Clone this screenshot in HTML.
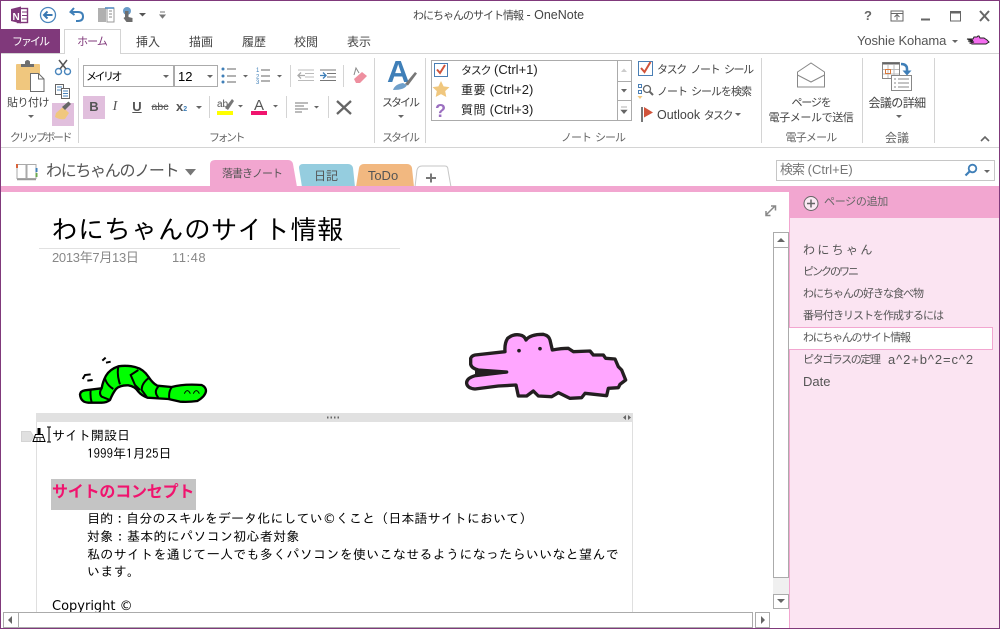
<!DOCTYPE html>
<html lang="ja">
<head>
<meta charset="utf-8">
<title>わにちゃんのサイト情報 - OneNote</title>
<style>
html,body{margin:0;padding:0;background:#fff;}
#w{position:relative;width:1000px;height:629px;overflow:hidden;background:#fff;font-family:"Liberation Sans","Noto Sans CJK JP",sans-serif;color:#444;font-size:12px;}
.t{position:absolute;white-space:nowrap;line-height:18px;height:18px;}
.c{transform:translateX(-50%);}
.b{position:absolute;box-sizing:border-box;}
.l{color:#666;font-size:11px;}
.g{font-family:"IPAGothic","Liberation Sans",sans-serif;color:#000;font-size:13px;letter-spacing:.3px;}
.p{color:#555;font-size:11px;letter-spacing:-1px;}
svg{position:absolute;overflow:visible;}
.ar{position:absolute;width:0;height:0;border-left:3px solid transparent;border-right:3px solid transparent;border-top:3px solid #666;}
.sep{position:absolute;width:1px;background:#d4d4d4;}
</style>
</head>
<body>
<div id="w">
<!-- QAT -->
<svg style="left:0;top:0" width="200" height="28">
<rect x="17.500" y="8.500" width="10" height="14" fill="#fff" stroke="#80397b" stroke-width="1.400"/>
<path d="M22 12h5M22 15.500h5M22 19h5" stroke="#80397b"/>
<path d="M11 9l10-2.500v17l-10-2.500z" fill="#80397b"/>
<text x="12.500" y="20" font-size="10" font-weight="bold" fill="#fff" font-family="Liberation Sans">N</text>
<circle cx="48" cy="15" r="7.500" fill="none" stroke="#4a86bd" stroke-width="1.300"/>
<path d="M52.500 15h-8M47.500 11.500l-3.500 3.500 3.500 3.500" fill="none" stroke="#3a78b3" stroke-width="2"/>
<path d="M74 8l-3.500 4 4 3M71 12h7q5 0 5 4.500t-5 4.500h-2" fill="none" stroke="#3f7fb8" stroke-width="2"/>
<rect x="98" y="8" width="8" height="14" fill="#b0b0b0"/>
<rect x="107" y="8" width="7" height="14" fill="#fff" stroke="#9a9a9a"/>
<path d="M109 11h3M109 14h3M109 17h3" stroke="#888"/>
<path d="M105 8h9" stroke="#4a86bd" stroke-width="1.500"/>
<circle cx="127" cy="11" r="4" fill="#6a9cc8"/>
<path d="M125 11h3.500v6l4 1v4h-6l-3-4 1.500-1z" fill="#6d6d6d"/>
<path d="M139 13h7l-3.500 3.500z" fill="#555"/>
<path d="M160 12h5M160 15h5l-2.500 3z" stroke="#777" fill="#777"/>
</svg>
<div class="t" style="left:413px;top:6px;color:#444;font-size:12.500px"><span style="letter-spacing:-1px;font-size:11px">わにちゃんのサイト情報</span> - OneNote</div>
<!-- window buttons -->
<svg style="left:860px;top:5px" width="135" height="20">
<text x="4" y="15" font-size="13" font-weight="bold" fill="#666" font-family="Liberation Sans">?</text>
<rect x="31" y="6" width="12" height="10" fill="none" stroke="#666"/>
<path d="M31 8.500h12M37 15v-5M34.500 12l2.500-2.500 2.500 2.500" fill="none" stroke="#666"/>
<path d="M61 14.500h9" stroke="#666" stroke-width="2"/>
<rect x="90.500" y="6.500" width="10" height="9.500" fill="none" stroke="#666"/>
<path d="M90 7.500h11" stroke="#666" stroke-width="2"/>
<path d="M120 6l9 10M129 6l-9 10" stroke="#666" stroke-width="2"/>
</svg>
<div class="t" style="left:857px;top:32px;font-size:13px;color:#555;letter-spacing:-.1px">Yoshie Kohama</div>
<div class="ar" style="left:952px;top:40px"></div>
<svg style="left:966px;top:35px" width="24" height="12"><path d="M1 4h6l1-2h3l1-1h1l1 2h4l3 2 2 2-3 2h-14l-2-1 4-1-6-1 5-.5z" fill="#f56ef0" stroke="#222" stroke-width="1"/></svg>
<!-- tabs -->
<div class="b" style="left:1px;top:29px;width:59px;height:25px;background:#80397b"></div>
<div class="t c" style="left:30px;top:33px;color:#fff;font-size:11px;letter-spacing:-2px">ファイル</div>
<div class="b" style="left:0;top:53px;width:1000px;height:1px;background:#d4d4d4"></div>
<div class="b" style="left:64px;top:29px;width:57px;height:25px;background:#fff;border:1px solid #d4d4d4;border-bottom:none"></div>
<div class="t c" style="left:92px;top:33px;color:#80397b;font-size:11px;letter-spacing:-1px">ホーム</div>
<div class="t c" style="left:148px;top:33px">挿入</div>
<div class="t c" style="left:201px;top:33px">描画</div>
<div class="t c" style="left:254px;top:33px">履歴</div>
<div class="t c" style="left:306px;top:33px">校閲</div>
<div class="t c" style="left:359px;top:33px">表示</div>
<!-- ribbon separators -->
<div class="sep" style="left:78px;top:58px;height:85px"></div>
<div class="sep" style="left:374px;top:58px;height:85px"></div>
<div class="sep" style="left:425px;top:58px;height:85px"></div>
<div class="sep" style="left:761px;top:58px;height:85px"></div>
<div class="sep" style="left:862px;top:58px;height:85px"></div>
<div class="sep" style="left:934px;top:58px;height:85px"></div>
<div class="b" style="left:0;top:147px;width:1000px;height:1px;background:#d4d4d4"></div>
<!-- clipboard -->
<div class="b" style="left:52px;top:103px;width:22px;height:23px;background:#e1bfdd"></div>
<svg style="left:0;top:55px" width="80" height="75">
<rect x="16" y="9" width="24" height="26" rx="1" fill="#f0c77e"/>
<path d="M21 12v-3h4v-2.500q1-1.500 2.500-1.500t2.500 1.500v2.500h4v3z" fill="#6f6f6f"/>
<path d="M30.500 18.500h8l5.500 5.500v12.500h-13.500z" fill="#fff" stroke="#6d6d6d"/>
<path d="M38.500 18.500v5.500h5.500" fill="none" stroke="#6d6d6d"/>
<circle cx="58.500" cy="16.500" r="3" fill="none" stroke="#4a86bd" stroke-width="1.400"/>
<circle cx="67.500" cy="16.500" r="3" fill="none" stroke="#4a86bd" stroke-width="1.400"/>
<path d="M60 14l7-9M66 14l-7-9" stroke="#555" stroke-width="1.500"/>
<rect x="55.500" y="29.500" width="8" height="10" fill="#fff" stroke="#666"/>
<rect x="61.500" y="33.500" width="8" height="10" fill="#fff" stroke="#666"/>
<path d="M57 32h5M57 35h4M63 36h5M63 38.500h5M63 41h5" stroke="#4a86bd"/>
<path d="M56 58l7-6 6 6-4 6q-5 1-10-2z" fill="#f0c77e"/>
<path d="M62 52l3 3 6-6-2.500-2.500z" fill="#666"/>
</svg>
<div class="t c" style="left:28px;top:94px;font-size:11px;letter-spacing:-.5px">貼り付け</div>
<div class="ar" style="left:28px;top:115px"></div>
<div class="t c l" style="left:40px;top:129px;letter-spacing:-2.400px">クリップボード</div>
<!-- font -->
<div class="b" style="left:83px;top:65px;width:91px;height:22px;background:#fff;border:1px solid #ababab"></div>
<div class="b" style="left:174px;top:65px;width:44px;height:22px;background:#fff;border:1px solid #ababab"></div>
<div class="t" style="left:86px;top:68px;color:#000;font-size:11px;letter-spacing:-2.500px">メイリオ</div>
<div class="t" style="left:178px;top:68px;color:#000;font-size:13px">12</div>
<div class="ar" style="left:163px;top:75px"></div>
<div class="ar" style="left:207px;top:75px"></div>
<div class="b" style="left:83px;top:96px;width:22px;height:23px;background:#e1bfdd"></div>
<svg style="left:215px;top:60px" width="170" height="65" font-family="Liberation Sans,sans-serif">
<g fill="#3f7fb8"><circle cx="8" cy="9" r="1.500"/><circle cx="8" cy="16" r="1.500"/><circle cx="8" cy="22" r="1.500"/></g>
<path d="M12 9h9M12 16h9M12 22h9" stroke="#666"/>
<path d="M28 15h5l-2.500 2.500z" fill="#666"/>
<text x="41" y="12" font-size="6" fill="#3f7fb8">1</text><text x="41" y="18.500" font-size="6" fill="#3f7fb8">2</text><text x="41" y="24" font-size="6" fill="#3f7fb8">3</text>
<path d="M46 10h9M46 16h9M46 21h9" stroke="#666"/>
<path d="M62 15h5l-2.500 2.500z" fill="#666"/>
<path d="M83 10h16M90 13.500h9M90 17h9M83 20.500h16" stroke="#bbb"/>
<path d="M90 15.500h-7M86 12.500l-3 3 3 3" fill="none" stroke="#aaa" stroke-width="1.300"/>
<path d="M105 10h16M112 13.500h9M112 17h9M105 20.500h16" stroke="#777"/>
<path d="M105 15.500h6M108 12.500l3 3-3 3" fill="none" stroke="#3f7fb8" stroke-width="1.300"/>
<path d="M139 19l8-7 5 4-7 7h-4z" fill="#ee8f9f"/>
<path d="M139 15l2-7 3 5" fill="none" stroke="#888"/>
</svg>
<div class="sep" style="left:290px;top:65px;height:22px"></div>
<div class="sep" style="left:343px;top:65px;height:22px"></div>
<div class="sep" style="left:209px;top:96px;height:22px"></div>
<div class="sep" style="left:286px;top:96px;height:22px"></div>
<div class="sep" style="left:328px;top:96px;height:22px"></div>
<div class="t c" style="left:94px;top:98px;font-weight:bold;font-size:13px;color:#555">B</div>
<div class="t c" style="left:115px;top:98px;font-style:italic;font-size:14px;font-family:'Liberation Serif',serif;color:#555">I</div>
<div class="t c" style="left:137px;top:98px;font-size:13px;font-weight:bold;color:#555;text-decoration:underline">U</div>
<div class="t c" style="left:160px;top:98px;font-size:10.500px;color:#555;text-decoration:line-through">abc</div>
<div class="t" style="left:176px;top:98px;font-size:13px;font-weight:bold;color:#555">x<span style="font-size:7px;color:#3f7fb8">2</span></div>
<div class="ar" style="left:196px;top:106px"></div>
<svg style="left:215px;top:95px" width="130" height="26" font-family="Liberation Sans,sans-serif">
<text x="2" y="12" font-size="10" fill="#555">ab</text>
<path d="M10 13l7-9 2 2-6 9z" fill="#777"/>
<rect x="2" y="16" width="16" height="4" fill="#ffff00"/>
<path d="M23 10h5l-2.500 2.500z" fill="#666"/>
<text x="44" y="15" font-size="15" fill="#555" text-anchor="middle">A</text>
<rect x="36" y="16" width="16" height="4" fill="#f0146e"/>
<path d="M58 10h5l-2.500 2.500z" fill="#666"/>
<path d="M80 8h13M80 11h9M80 14h13M80 17h7" stroke="#777"/>
<path d="M99 11h5l-2.500 2.500z" fill="#666"/>
<path d="M122 6l14 13M136 6l-14 13" stroke="#666" stroke-width="2.300"/>
</svg>
<div class="t c l" style="left:226px;top:129px;letter-spacing:-2.500px">フォント</div>
<!-- style -->
<svg style="left:385px;top:58px" width="36" height="36">
<text x="2" y="24" font-size="31" font-weight="bold" fill="#3f7fb8" font-family="Liberation Sans">A</text>
<path d="M8 32q2-6 10-7l4 2q-2 5-14 5z" fill="#6f9fca"/>
<path d="M20 26l10-12 2 1.500-9 12z" fill="#777"/>
</svg>
<div class="t c" style="left:400px;top:94px;font-size:11px;letter-spacing:-2px">スタイル</div>
<div class="ar" style="left:398px;top:115px"></div>
<div class="t c l" style="left:400px;top:129px;letter-spacing:-2px">スタイル</div>
<!-- tags -->
<div class="b" style="left:431px;top:60px;width:201px;height:61px;background:#fff;border:1px solid #ababab"></div>
<div class="b" style="left:617px;top:60px;width:15px;height:61px;background:#fff;border:1px solid #ababab"></div>
<div class="b" style="left:617px;top:81px;width:15px;height:1px;background:#ababab"></div>
<div class="b" style="left:617px;top:100px;width:15px;height:1px;background:#ababab"></div>
<svg style="left:431px;top:60px" width="205" height="62" font-family="Liberation Sans,sans-serif">
<rect x="3.500" y="3.500" width="13" height="13" fill="#fff" stroke="#4a7fb5"/>
<path d="M6 9.500l3 3.500 5-8" fill="none" stroke="#d1533a" stroke-width="2"/>
<path d="M10 21l2.600 5.400 5.900.7-4.300 4 1.100 5.900-5.300-2.900-5.300 2.900 1.100-5.900-4.300-4 5.900-.7z" fill="#f0c77e"/>
<text x="4" y="57" font-size="18" font-weight="bold" fill="#9b6fc0">?</text>
<path d="M190 12l3-3.500 3 3.500z" fill="#ccc"/>
<path d="M190 29h6l-3 3.500z" fill="#666"/>
<path d="M190 47h6M190 50h6l-3 3.500z" stroke="#666" stroke-width=".6" fill="#666"/>
</svg>
<div class="t" style="left:461px;top:61px;color:#222;font-size:13px"><span style="letter-spacing:-1.200px;font-size:11px">タスク</span> (Ctrl+1)</div>
<div class="t" style="left:461px;top:81px;color:#222;font-size:13px"><span style="letter-spacing:.5px;font-size:12px">重要</span> (Ctrl+2)</div>
<div class="t" style="left:461px;top:101px;color:#222;font-size:13px"><span style="letter-spacing:.5px;font-size:12px">質問</span> (Ctrl+3)</div>
<svg style="left:636px;top:58px" width="24" height="68">
<rect x="2.500" y="3.500" width="14" height="14" fill="#fff" stroke="#4a7fb5"/>
<path d="M5 10l3.500 4 6-10" fill="none" stroke="#d1533a" stroke-width="2"/>
<rect x="2.500" y="26.500" width="3" height="3" fill="none" stroke="#4a7fb5"/>
<rect x="2.500" y="32.500" width="3" height="3" fill="none" stroke="#4a7fb5"/>
<path d="M1.500 38h5l-2.500 3z" fill="#f0c77e"/>
<circle cx="11" cy="31" r="3.500" fill="none" stroke="#666" stroke-width="1.300"/>
<path d="M13.500 33.500l3.500 3.500" stroke="#666" stroke-width="2"/>
<rect x="5" y="49" width="2" height="15" fill="#777"/>
<path d="M8 49l9 5.500-9 5z" fill="#d1533a"/>
</svg>
<div class="t" style="left:657px;top:61px;font-size:11px;letter-spacing:-1.400px;word-spacing:3px">タスク ノート シール</div>
<div class="t" style="left:657px;top:83px;font-size:11px;letter-spacing:-1px;word-spacing:2px">ノート シールを検索</div>
<div class="t" style="left:657px;top:106px;font-size:12.500px">Outlook <span style="letter-spacing:-1.500px;font-size:11px">タスク</span></div>
<div class="ar" style="left:735px;top:113px"></div>
<div class="t c l" style="left:593px;top:129px;letter-spacing:-1px;word-spacing:2px">ノート シール</div>
<!-- email -->
<svg style="left:796px;top:62px" width="32" height="28">
<path d="M1.500 10L15 1L28.500 10V25H1.500Z" fill="#fff" stroke="#888"/>
<path d="M1.500 13L15 20L28.500 13" fill="none" stroke="#888"/>
</svg>
<div class="t c" style="left:811px;top:94px;font-size:11px;letter-spacing:-1.200px">ページを</div>
<div class="t c" style="left:811px;top:109px;font-size:11px;letter-spacing:-.4px">電子メールで送信</div>
<div class="t c l" style="left:811px;top:129px;letter-spacing:-.8px">電子メール</div>
<!-- meeting -->
<svg style="left:880px;top:60px" width="36" height="34">
<rect x="2.500" y="2.500" width="17" height="16" fill="#fff" stroke="#888"/>
<path d="M2.500 3.500h17" stroke="#666" stroke-width="2"/>
<path d="M8 5v13M14 5v13M3 9.500h16M3 14h16" stroke="#bbb"/>
<rect x="5.500" y="9.500" width="5" height="4" fill="none" stroke="#d9783a"/>
<rect x="11.500" y="15.500" width="20" height="15" fill="#fff" stroke="#888"/>
<path d="M14 19h2M18 19h11M14 23h2M18 23h11M14 27h2M18 27h11" stroke="#888"/>
<path d="M21 4q6 0 6 5v3" fill="none" stroke="#3f7fb8" stroke-width="2.500"/>
<path d="M22.500 10.500h9l-4.500 5z" fill="#3f7fb8"/>
</svg>
<div class="t c" style="left:897px;top:94px;letter-spacing:-.6px">会議の詳細</div>
<div class="ar" style="left:896px;top:115px"></div>
<div class="t c" style="left:897px;top:129px;color:#666">会議</div>
<svg style="left:980px;top:135px" width="12" height="8"><path d="M1 6l4-4 4 4" fill="none" stroke="#666" stroke-width="1.600"/></svg>
<!-- notebook bar -->
<svg style="left:15px;top:162px" width="24" height="20">
<path d="M2 2.500h9v14h-9zM12 2.500h9v14h-9z" fill="#fff" stroke="#aaa"/>
<path d="M2 17.500h19" stroke="#999" stroke-width="1.500"/>
<rect x="1" y="2" width="2" height="4" fill="#d9633a"/>
<rect x="20.500" y="6" width="2" height="4" fill="#3f7fb8"/>
<rect x="20.500" y="11" width="2" height="4" fill="#6aa84f"/>
</svg>
<div class="t" style="left:46px;top:160px;height:24px;line-height:24px;font-size:16px;color:#555;letter-spacing:-1.300px">わにちゃんのノート</div>
<svg style="left:184px;top:168px" width="14" height="10"><path d="M1 1h11l-5.500 6.500z" fill="#777"/></svg>
<svg style="left:205px;top:158px" width="255" height="30">
<path d="M5 29v-22q0-5 5-5h73q4 0 5 4l4 23z" fill="#f2a6d0"/>
<path d="M97 29l-3-19q0-4 4-4h45q4 0 5 4l2 19z" fill="#95cddf"/>
<path d="M151 29l3-19q1-4 5-4h43q4 0 5 4l2 19z" fill="#f2b880"/>
<path d="M210 29l2-17q1-4 5-4h23q3 0 3 4l3 17" fill="#fff" stroke="#c6c6c6"/>
</svg>
<div class="t c" style="left:252px;top:165px;font-size:11px;color:#555;letter-spacing:-1px">落書きノート</div>
<div class="t c" style="left:326px;top:167px;font-size:12px;color:#555">日記</div>
<div class="t c" style="left:383px;top:167px;font-size:13px;color:#555">ToDo</div>
<svg style="left:425px;top:172px" width="12" height="12"><path d="M1 6h10M6 1.500v9" stroke="#777" stroke-width="2"/></svg>
<div class="b" style="left:776px;top:160px;width:219px;height:21px;background:#fff;border:1px solid #c6c6c6"></div>
<div class="t" style="left:780px;top:161px;font-size:13px;color:#777"><span style="letter-spacing:-1px">検索</span> (Ctrl+E)</div>
<svg style="left:964px;top:163px" width="14" height="14"><circle cx="8.500" cy="5.500" r="3.800" fill="none" stroke="#3f7fb8" stroke-width="1.800"/><path d="M5.500 8.500l-4 4" stroke="#3f7fb8" stroke-width="2.200"/></svg>
<div class="ar" style="left:984px;top:170px"></div>
<div class="b" style="left:0;top:186px;width:1000px;height:6px;background:#f2a6d0"></div>
<!-- sidebar -->
<div class="b" style="left:789px;top:192px;width:210px;height:436px;background:#fbe4f2;border-left:1px solid #f2a6d0"></div>
<div class="b" style="left:790px;top:190px;width:209px;height:28px;background:#f2a6d0"></div>
<svg style="left:802px;top:195px" width="18" height="18"><circle cx="9" cy="8.500" r="7" fill="#fbe9f3" stroke="#666"/><path d="M5 8.500h8M9 4.500v8" stroke="#666" stroke-width="1.500"/></svg>
<div class="t" style="left:824px;top:193px;font-size:11px;color:#666;letter-spacing:-.3px">ページの追加</div>
<div class="b" style="left:789px;top:327px;width:204px;height:23px;background:#fff;border:1px solid #f2a6d0;border-left:none"></div>
<div class="t p" style="left:803px;top:241px;font-size:12px;letter-spacing:-.5px">わ に ち ゃ ん</div>
<div class="t p" style="left:803px;top:263px;letter-spacing:-2px">ピンクのワニ</div>
<div class="t p" style="left:803px;top:285px">わにちゃんの好きな食べ物</div>
<div class="t p" style="left:803px;top:307px">番号付きリストを作成するには</div>
<div class="t p" style="left:803px;top:329px;letter-spacing:-1.300px">わにちゃんのサイト情報</div>
<div class="t p" style="left:803px;top:351px;letter-spacing:-1.400px">ピタゴラスの定理</div>
<div class="t p" style="left:888px;top:351px;font-size:13px;letter-spacing:.9px">a^2+b^2=c^2</div>
<div class="t p" style="left:803px;top:373px;font-size:13px;letter-spacing:0">Date</div>
<!-- page -->
<svg style="left:764px;top:204px" width="14" height="14"><path d="M2 11l9-9M7 2h4.500v4.500M2 7v4.500h4.500" fill="none" stroke="#888" stroke-width="1.500"/></svg>
<div class="t" style="left:51px;top:213px;height:34px;line-height:34px;font-size:26.600px;color:#000;font-family:'Liberation Sans','IPAGothic',sans-serif">わにちゃんのサイト情報</div>
<div class="b" style="left:39px;top:248px;width:361px;height:1px;background:#e1e1e1"></div>
<div class="t" style="left:52px;top:249px;font-size:13px;color:#888;letter-spacing:-.3px">2013年7月13日</div>
<div class="t" style="left:172px;top:249px;font-size:13px;color:#888;letter-spacing:.5px">11:48</div>
<!-- worm -->
<svg style="left:60px;top:325px" width="160" height="90" viewBox="0 0 480 270">
<path d="M60 208Q62 198 75 196L125 190Q128 170 138 152Q150 132 175 124Q200 120 225 126Q250 132 265 155Q278 175 292 182L335 186Q370 176 425 180Q438 186 438 198Q436 214 412 228Q385 232 360 230L325 222L262 218Q245 212 235 200Q225 184 205 181Q180 180 168 192Q158 205 150 225Q140 233 125 233L85 233Q62 232 60 208Z" fill="#00ff00" stroke="#000" stroke-width="7" stroke-linejoin="round"/>
<g fill="none" stroke="#000" stroke-width="6">
<path d="M175 125Q170 150 180 178M235 135L212 150L225 180L240 195M265 160Q245 175 245 195L262 218M295 185Q280 200 295 218M335 187Q325 200 328 222M135 160Q140 180 160 192M125 190Q115 205 125 215L150 225M92 195Q90 215 95 232"/>
<path d="M127 107L137 98M138 113L152 110M68 162L75 150L92 148M82 167L98 165"/>
</g>
<path d="M373 206q9-18 18 0M400 206q9-18 18 0" fill="none" stroke="#000" stroke-width="3"/>
</svg>
<!-- crocodile -->
<svg style="left:455px;top:325px" width="185" height="105" viewBox="0 0 555 315">
<path d="M47 100Q50 92 60 90L150 80Q148 55 158 40Q175 26 195 30Q208 32 213 45Q225 28 265 28Q282 32 285 45L292 75Q320 70 340 70L355 80L405 78L415 90L445 90L452 100L480 102L490 125L500 135L512 165L495 178L490 188L460 190L455 212L390 205L380 218L345 220L310 203L290 215L250 213L235 198L215 213L190 213L183 180L130 183L60 192Q38 190 35 176Q33 160 60 152L155 141L70 135Q50 130 47 118Z" fill="#ffa6ff" stroke="#231f20" stroke-width="10" stroke-linejoin="round"/>
<path d="M60 153L155 146V137L60 135Z" fill="#231f20"/>
<circle cx="192" cy="77" r="5.500" fill="#231f20"/><circle cx="255" cy="71" r="5.500" fill="#231f20"/>
</svg>
<!-- note container -->
<div class="b" style="left:36px;top:413px;width:597px;height:9px;background:#e1e1e1"></div>
<div class="b" style="left:36px;top:422px;width:1px;height:190px;background:#dfdfdf"></div>
<div class="b" style="left:632px;top:422px;width:1px;height:190px;background:#dfdfdf"></div>
<svg style="left:325px;top:414px" width="310" height="7">
<path d="M2 3.500h1.500M5.500 3.500h1.500M9 3.500h1.500M12.500 3.500h1.500" stroke="#666" stroke-width="2"/>
<path d="M301 1v5l-3-2.500zM303 1v5l3-2.500z" fill="#666"/>
</svg>
<svg style="left:20px;top:428px" width="32" height="18">
<path d="M1.500 3.500h9l3 5-3 5h-9z" fill="#e0e0e0" stroke="#d4d4d4"/>
<path d="M17.500 0h3v6h-3z" fill="#000"/>
<path d="M15.500 6.500h7l2.500 7h-12z" fill="#fff" stroke="#000"/>
<path d="M14 9.500h10M17 10v3M20 10v3" stroke="#000" stroke-width=".8"/>
<path d="M27 -1h4M29 -1v15M27 14h4" stroke="#000" fill="none"/>
</svg>
<div class="t g" style="left:52px;top:427px;letter-spacing:0">サイト開設日</div>
<div class="t g" style="left:87px;top:445px;letter-spacing:0">1999年1月25日</div>
<div class="b" style="left:51px;top:479px;width:145px;height:31px;background:#c4c4c4"></div>
<div class="t" style="left:52px;top:484px;font-size:16px;font-weight:bold;color:#f0146e;letter-spacing:-.2px;font-family:'Liberation Sans','Noto Sans CJK JP',sans-serif">サイトのコンセプト</div>
<div class="t g" style="left:87px;top:510px;letter-spacing:.1px">目的：自分のスキルをデータ化にしてい<span style="font-family:'DejaVu Sans',sans-serif;font-size:13px">©</span>くこと（日本語サイトにおいて）</div>
<div class="t g" style="left:87px;top:528px">対象：基本的にパソコン初心者対象</div>
<div class="t g" style="left:87px;top:546px">私のサイトを通じて一人でも多くパソコンを使いこなせるようになったらいいなと望んで</div>
<div class="t g" style="left:87px;top:563px">います。</div>
<div class="b" style="left:40px;top:596px;width:200px;height:16px;overflow:hidden"><div class="t" style="left:12px;top:2px;font-family:'DejaVu Sans',sans-serif;font-size:13px;color:#000">Copyright ©</div></div>
<!-- vertical scrollbar -->
<div class="b" style="left:773px;top:232px;width:16px;height:376px;background:#f0f0f0"></div>
<div class="b" style="left:773px;top:232px;width:16px;height:16px;background:#fff;border:1px solid #ababab"></div>
<div class="b" style="left:773px;top:247px;width:16px;height:331px;background:#fff;border:1px solid #ababab"></div>
<div class="b" style="left:773px;top:594px;width:16px;height:15px;background:#fff;border:1px solid #ababab"></div>
<svg style="left:773px;top:232px" width="16" height="376">
<path d="M4 10l4-4 4 4z" fill="#666"/><path d="M4 367h8l-4 4z" fill="#666"/>
</svg>
<!-- horizontal scrollbar -->
<div class="b" style="left:3px;top:612px;width:16px;height:16px;background:#fff;border:1px solid #ababab"></div>
<div class="b" style="left:18px;top:612px;width:735px;height:16px;background:#fff;border:1px solid #ababab"></div>
<div class="b" style="left:755px;top:612px;width:15px;height:16px;background:#fff;border:1px solid #ababab"></div>
<svg style="left:0;top:612px" width="775" height="16">
<path d="M12 4v8l-4-4z" fill="#666"/><path d="M761 4v8l4-4z" fill="#666"/>
</svg>
<!-- window frame -->
<div class="b" style="left:0;top:0;width:1000px;height:1px;background:#80397b"></div>
<div class="b" style="left:0;top:0;width:1px;height:629px;background:#80397b"></div>
<div class="b" style="left:999px;top:0;width:1px;height:629px;background:#80397b"></div>
<div class="b" style="left:0;top:628px;width:1000px;height:1px;background:#80397b"></div>
</div>
</body>
</html>
